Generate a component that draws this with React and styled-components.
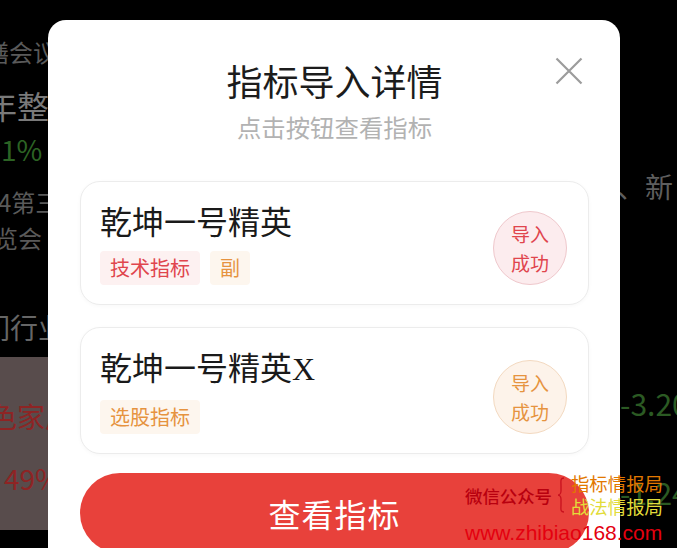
import React from 'react'
import styled, { createGlobalStyle } from 'styled-components'

const GlobalStyle = createGlobalStyle`
  html, body {
    margin: 0;
    padding: 0;
    background: #000;
  }
  body {
    font-family: "Noto Sans CJK SC", "Noto Sans", sans-serif;
  }
  * {
    box-sizing: border-box;
  }
`

const Screen = styled.div`
  position: relative;
  width: 677px;
  height: 548px;
  overflow: hidden;
  background: #000;
`

/* dimmed app page behind the dialog */
const Backdrop = styled.div`
  display: grid;
  grid-template-columns: 48px 572px 57px;
  height: 100%;
`

const SideColumn = styled.div`
  display: flex;
  flex-direction: column;
  overflow: hidden;
  white-space: nowrap;
`

const BgLine = styled.div`
  height: ${p => p.$h || 36}px;
  line-height: ${p => p.$h || 36}px;
  margin-top: ${p => p.$top || 0}px;
  margin-left: ${p => p.$shift || 0}px;
  font-size: ${p => p.$size || 24}px;
  color: ${p => p.$color || '#5a5a5a'};
`

const BgCard = styled.div`
  margin-top: 12px;
  height: 173px;
  padding-top: 41px;
  background: #584c4c;
`

const Overlay = styled.div`
  position: absolute;
  inset: 0;
`

const Modal = styled.div`
  margin: 20px 0 0 48px;
  width: 572px;
  height: 580px;
  padding: 36px 31px 0 32px;
  background: #fff;
  border-radius: 18px;
`

const Header = styled.div`
  display: grid;
  grid-template-columns: 1fr auto 1fr;
  align-items: start;
`

const Heading = styled.div`
  grid-column: 2;
  display: flex;
  flex-direction: column;
  align-items: center;
`

const Title = styled.h2`
  margin: 0;
  font-size: 36px;
  line-height: 48px;
  font-weight: 400;
  color: #1c1c1c;
`

const Subtitle = styled.p`
  margin: 7px 0 0;
  font-size: 24.4px;
  line-height: 32px;
  color: #b2b2b2;
`

const CloseButton = styled.button`
  justify-self: end;
  width: 28px;
  height: 28px;
  margin: 1px 6px 0 0;
  padding: 0;
  border: none;
  background: transparent;
  svg {
    display: block;
  }
`

const CardList = styled.div`
  display: flex;
  flex-direction: column;
  gap: 22px;
  margin-top: 38px;
`

const Card = styled.div`
  display: flex;
  justify-content: space-between;
  align-items: flex-end;
  padding: 18px 21px 19px 19px;
  border: 1px solid #ececec;
  border-radius: 20px;
  background: #fff;
  box-shadow: 0 1px 4px rgba(0, 0, 0, 0.03);
`

const CardName = styled.div`
  font-size: 32px;
  line-height: 40px;
  color: #1a1a1a;
`

const Latin = styled.span`
  font-family: "Liberation Serif", serif;
`

const Tags = styled.div`
  display: flex;
  gap: 10px;
  margin-top: 11px;
`

const tones = {
  red: { fg: '#e0454d', bg: '#fdf1f1', ring: '#efc8cc', fill: '#fcecee' },
  orange: { fg: '#e6933f', bg: '#fdf6ee', ring: '#f3d9c0', fill: '#fdf3ea' },
}

const Tag = styled.span`
  height: 34px;
  padding: 0 10px;
  font-size: 20px;
  line-height: 34px;
  border-radius: 4px;
  color: ${p => tones[p.$tone].fg};
  background: ${p => tones[p.$tone].bg};
`

const Badge = styled.div`
  width: 74px;
  height: 74px;
  display: flex;
  flex-direction: column;
  align-items: center;
  justify-content: center;
  border-radius: 50%;
  font-size: 19px;
  line-height: 29px;
  color: ${p => tones[p.$tone].fg};
  background: ${p => tones[p.$tone].fill};
  border: 1px solid ${p => tones[p.$tone].ring};
`

const ViewButton = styled.button`
  display: block;
  width: 100%;
  height: 80px;
  margin-top: 19px;
  border: none;
  border-radius: 40px;
  background: #e8413b;
  color: #fff;
  font-family: inherit;
  font-size: 32px;
  letter-spacing: 1px;
`

/* channel watermark stamped over the screenshot */
const Watermark = styled.div`
  position: absolute;
  left: 465px;
  top: 472px;
  display: flex;
  flex-direction: column;
`

const StampRow = styled.div`
  display: flex;
  align-items: center;
`

const Channel = styled.span`
  font-size: 17.4px;
  font-weight: 500;
  color: #b8000f;
`

const Brace = styled.svg`
  margin: 0 6px 0 5px;
`

const StampNames = styled.div`
  display: flex;
  flex-direction: column;
`

const StampName = styled.span`
  font-size: 18.4px;
  line-height: 23px;
  color: ${p => p.$color};
`

const Site = styled.div`
  margin-top: 4px;
  font-family: "Liberation Sans", Arial, sans-serif;
  font-size: 21px;
  line-height: 21px;
  color: #e4000f;
`

const items = [
  { name: '乾坤一号精英', latin: '', tags: [['技术指标', 'red'], ['副', 'orange']], tone: 'red' },
  { name: '乾坤一号精英', latin: 'X', tags: [['选股指标', 'orange']], tone: 'orange' },
]

const App = () => {
  return (
    <Screen>
      <GlobalStyle />
      <Backdrop>
        <SideColumn>
          <BgLine $top={34} $shift={-15}>膳会议</BgLine>
          <BgLine $top={15} $h={40} $size={32} $shift={-15} $color="#7a7a7a">年整体</BgLine>
          <BgLine $top={6} $size={28} $shift={1} $color="#2c6324">1%</BgLine>
          <BgLine $top={17} $shift={-2}>4第三届</BgLine>
          <BgLine $shift={-6}>览会</BgLine>
          <BgLine $top={53} $size={28} $shift={-18} $color="#666">们行业</BgLine>
          <BgCard>
            <BgLine $size={28} $shift={-11} $color="#8e2424">色家居</BgLine>
            <BgLine $top={26} $size={28} $shift={4} $color="#8e2424">49%</BgLine>
          </BgCard>
        </SideColumn>
        <div />
        <SideColumn>
          <BgLine $top={168} $size={28} $shift={-3} $color="#5e5e5e">、新</BgLine>
          <BgLine $top={181} $size={30} $color="#2b5a23">-3.20</BgLine>
          <BgLine $top={53} $size={30} $color="#2b5a23">-1.24</BgLine>
        </SideColumn>
      </Backdrop>

      <Overlay>
        <Modal>
          <Header>
            <Heading>
              <Title>指标导入详情</Title>
              <Subtitle>点击按钮查看指标</Subtitle>
            </Heading>
            <CloseButton aria-label="关闭">
              <svg width="28" height="28" viewBox="0 0 28 28">
                <path d="M1.5 1.5 L26.5 26.5 M26.5 1.5 L1.5 26.5" stroke="#9c9c9c" strokeWidth="2.2" fill="none" />
              </svg>
            </CloseButton>
          </Header>

          <CardList>
            {items.map((item, index) => (
              <Card key={index}>
                <div>
                  <CardName>
                    {item.name}
                    {item.latin && <Latin>{item.latin}</Latin>}
                  </CardName>
                  <Tags>
                    {item.tags.map(([label, tone]) => (
                      <Tag key={label} $tone={tone}>{label}</Tag>
                    ))}
                  </Tags>
                </div>
                <Badge $tone={item.tone}>
                  <span>导入</span>
                  <span>成功</span>
                </Badge>
              </Card>
            ))}
          </CardList>

          <ViewButton>查看指标</ViewButton>
        </Modal>
      </Overlay>

      <Watermark>
        <StampRow>
          <Channel>微信公众号</Channel>
          <Brace width="8" height="36" viewBox="0 0 8 36">
            <path d="M7 1 C3 1 4 4 4 9 L4 14 C4 17 2 18 1 18 C2 18 4 19 4 22 L4 27 C4 32 3 35 7 35" stroke="#c8101e" strokeWidth="1.3" fill="none" />
          </Brace>
          <StampNames>
            <StampName $color="#e27800">指标情报局</StampName>
            <StampName $color="#e2dc3a">战法情报局</StampName>
          </StampNames>
        </StampRow>
        <Site>www.zhibiao168.com</Site>
      </Watermark>
    </Screen>
  )
}

export default App
